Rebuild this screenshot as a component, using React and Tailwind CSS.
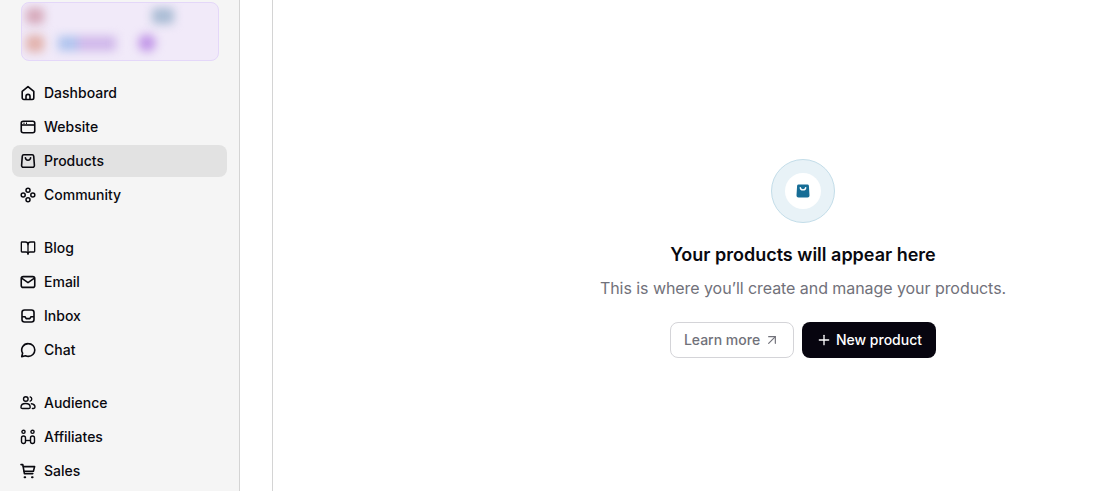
import { BookOpen, ArrowUpRight, Plus } from "lucide-react";

const House = () => (
  <svg width="16" height="16" viewBox="0 0 16 16" fill="none" stroke="currentColor" strokeWidth="1.6" strokeLinejoin="round">
    <path d="M2.2 6.4 8 1.6l5.8 4.8v6.4a1.7 1.7 0 0 1-1.7 1.7H3.9a1.7 1.7 0 0 1-1.7-1.7z" />
    <path d="M6 14.4v-3a2 2 0 0 1 4 0v3" />
  </svg>
);

const Website = () => (
  <svg width="16" height="16" viewBox="0 0 16 16" fill="none" stroke="currentColor" strokeWidth="1.6">
    <rect x="1.25" y="2.25" width="13.5" height="11.5" rx="2" />
    <path d="M1.25 6h13.5" />
    <path d="M3.5 4.2h1M6 4.2h1" />
  </svg>
);

const Bag = () => (
  <svg width="16" height="16" viewBox="0 0 16 16" fill="none" stroke="currentColor" strokeWidth="1.6" strokeLinecap="round" strokeLinejoin="round">
    <path d="M3.8 1.8h8.4a1.5 1.5 0 0 1 1.5 1.3l.7 9.2a1.8 1.8 0 0 1-1.8 2H3.4a1.8 1.8 0 0 1-1.8-2l.7-9.2a1.5 1.5 0 0 1 1.5-1.3z" />
    <path d="M5.4 4.8c.3 3.2 4.9 3.2 5.2 0" />
  </svg>
);

const Community = () => (
  <svg width="16" height="16" viewBox="0 0 16 16" fill="none" stroke="currentColor" strokeWidth="1.5">
    <circle cx="8" cy="3.2" r="2" />
    <circle cx="3.2" cy="8" r="2" />
    <circle cx="12.8" cy="8" r="2" />
    <circle cx="8" cy="12.8" r="2" />
  </svg>
);

const Mail = () => (
  <svg width="16" height="16" viewBox="0 0 16 16" fill="none" stroke="currentColor" strokeWidth="1.6" strokeLinejoin="round">
    <rect x="1.25" y="2.6" width="13.5" height="10.8" rx="2" />
    <path d="M1.6 4.2 8 8.6l6.4-4.4" />
  </svg>
);

const Inbox = () => (
  <svg width="16" height="16" viewBox="0 0 16 16" fill="none" stroke="currentColor" strokeWidth="1.6" strokeLinejoin="round">
    <rect x="2" y="2" width="12" height="12" rx="2.5" />
    <path d="M2 8.8h3l1.2 1.8h3.6L11 8.8h3" />
  </svg>
);

const Chat = () => (
  <svg width="16" height="16" viewBox="0 0 16 16" fill="none" stroke="currentColor" strokeWidth="1.6" strokeLinejoin="round">
    <path d="M8.4 1.6a6.4 6.4 0 0 1 0 12.8c-1 0-2-.2-2.8-.6l-3.9.8.9-3.4a6.4 6.4 0 0 1 5.8-9.6z" />
  </svg>
);

const Audience = () => (
  <svg width="16" height="16" viewBox="0 0 16 16" fill="none" stroke="currentColor" strokeWidth="1.4">
    <circle cx="5.8" cy="4" r="2.3" />
    <path d="M10.2 1.9a2.2 2.2 0 0 1 0 4.2" strokeLinecap="round" />
    <path d="M1 12.2c0-2.2 2-3.7 4.6-3.7s4.6 1.5 4.6 3.7c0 .9-.7 1.3-1.5 1.3H2.5c-.8 0-1.5-.4-1.5-1.3z" />
    <path d="M11.4 8.8c2 .3 3.6 1.5 3.6 3.3 0 .9-.6 1.4-1.4 1.4h-1.2" strokeLinecap="round" />
  </svg>
);

const Affiliates = () => (
  <svg width="16" height="16" viewBox="0 0 16 16" fill="none" stroke="currentColor" strokeWidth="1.4">
    <circle cx="3.5" cy="2.8" r="1.6" />
    <circle cx="12.5" cy="2.8" r="1.6" />
    <rect x="1.5" y="7" width="4" height="7.5" rx="2" />
    <rect x="10.5" y="7" width="4" height="7.5" rx="2" />
    <path d="M5.5 11.5h5" />
  </svg>
);

const Cart = () => (
  <svg width="16" height="16" viewBox="0 0 16 16" fill="none" stroke="currentColor" strokeWidth="1.6" strokeLinecap="round" strokeLinejoin="round">
    <path d="M1 1.6h1.8l1.6 9h8.4" />
    <path d="M3.4 3.6h11.2l-1.2 4.6H4.2" />
    <path d="M4.6 14.2h.6M12 14.2h.6" strokeWidth="2" />
  </svg>
);

const groups = [
  [
    { label: "Dashboard", icon: <House /> },
    { label: "Website", icon: <Website /> },
    { label: "Products", icon: <Bag />, active: true },
    { label: "Community", icon: <Community /> },
  ],
  [
    { label: "Blog", icon: <BookOpen size={16} strokeWidth={2} /> },
    { label: "Email", icon: <Mail /> },
    { label: "Inbox", icon: <Inbox /> },
    { label: "Chat", icon: <Chat /> },
  ],
  [
    { label: "Audience", icon: <Audience /> },
    { label: "Affiliates", icon: <Affiliates /> },
    { label: "Sales", icon: <Cart /> },
  ],
];

const NavItem = ({ label, icon, active }) => (
  <div className={`h-8 flex items-center gap-2 pl-2 rounded-lg text-sm font-[450] text-[#09090f] ${active ? "bg-[#e2e2e2]" : ""}`}>
    <span className="w-4 h-4 shrink-0">{icon}</span>
    {label}
  </div>
);

// blurred account card at the top of the sidebar
const AccountCard = () => (
  <div className="h-[59px] rounded-lg border border-[#e4d7f9] bg-[#f1eaf9] overflow-hidden px-[4px] pt-[5px] flex flex-col gap-[10px]">
    <div className="flex justify-between pr-[40px] blur-[5px]">
      <div className="w-[18px] h-[16px] rounded bg-[#d6a9ba]" />
      <div className="w-[22px] h-[16px] rounded bg-[#a9bcd4]" />
    </div>
    <div className="flex items-center blur-[5px]">
      <div className="w-[18px] h-[17px] rounded bg-[#e2b2ac]" />
      <div className="ml-[14px] w-[20px] h-[15px] bg-[#b0c4ee]" />
      <div className="w-[38px] h-[15px] bg-[#d0b8ea]" />
      <div className="ml-[22px] w-[18px] h-[18px] rounded-full bg-[#c298e8]" />
    </div>
  </div>
);

export default function App() {
  return (
    <div className="h-[491px] overflow-hidden flex bg-white font-['Inter',sans-serif]">
      <aside className="w-[240px] shrink-0 bg-[#f5f5f5] border-r border-[#d4d4d4] pl-3 pr-3">
        <div className="pt-[2px] pl-[9px] pr-2">
          <AccountCard />
        </div>
        <nav className="mt-4 flex flex-col gap-[21px]">
          {groups.map((items, i) => (
            <div key={i} className="flex flex-col gap-[2px]">
              {items.map((item) => (
                <NavItem key={item.label} {...item} />
              ))}
            </div>
          ))}
        </nav>
      </aside>

      <div className="w-[33px] shrink-0 border-r border-[#d4d4d4]" />

      <main className="flex-1 flex flex-col items-center pt-[159px] pl-[233px]">
        <div className="w-16 h-16 rounded-full bg-[#e8f2f7] border border-[#c3dde9] flex items-center justify-center">
          <div className="w-9 h-9 rounded-full bg-white flex items-center justify-center">
            <svg width="14" height="14" viewBox="0 0 14 14">
              <path d="M2.6.5h8.8a1.5 1.5 0 0 1 1.5 1.3l.6 9.6a2 2 0 0 1-2 2.1H2.5a2 2 0 0 1-2-2.1l.6-9.6A1.5 1.5 0 0 1 2.6.5z" fill="#176d96" />
              <path d="M4.3 3.6c.3 3 5.1 3 5.4 0" fill="none" stroke="#fff" strokeWidth="1.4" strokeLinecap="round" />
            </svg>
          </div>
        </div>
        <h2 className="mt-[18px] text-lg leading-7 font-semibold text-[#09090f]">Your products will appear here</h2>
        <p className="mt-[7px] text-base leading-6 tracking-[-0.06px] text-[#71717a]">This is where you’ll create and manage your products.</p>
        <div className="mt-[22px] flex gap-2">
          <button className="w-[124px] h-9 rounded-lg border border-[#d4d4d8] bg-white flex items-center justify-center gap-1 text-sm font-medium text-[#71717a]">
            Learn more
            <ArrowUpRight size={16} strokeWidth={1.75} />
          </button>
          <button className="w-[134px] h-9 rounded-lg bg-[#07050f] flex items-center justify-center gap-1 text-sm font-medium text-white">
            <Plus size={16} strokeWidth={2} />
            New product
          </button>
        </div>
      </main>
    </div>
  );
}
